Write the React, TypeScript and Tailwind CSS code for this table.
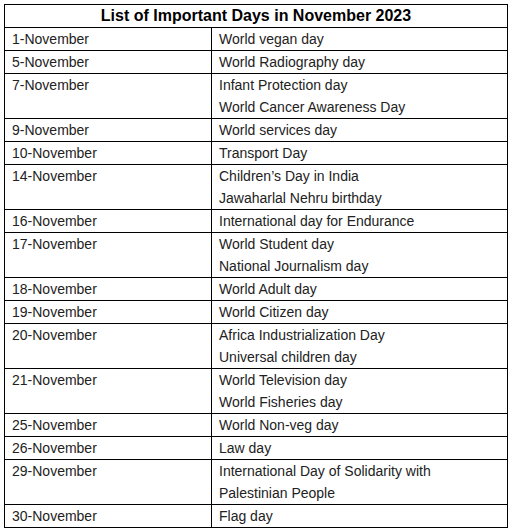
import React from "react";

const rows: [string, string[]][] = [
  ["1-November", ["World vegan day"]],
  ["5-November", ["World Radiography day"]],
  ["7-November", ["Infant Protection day", "World Cancer Awareness Day"]],
  ["9-November", ["World services day"]],
  ["10-November", ["Transport Day"]],
  ["14-November", ["Children\u2019s Day in India", "Jawaharlal Nehru birthday"]],
  ["16-November", ["International day for Endurance"]],
  ["17-November", ["World Student day", "National Journalism day"]],
  ["18-November", ["World Adult day"]],
  ["19-November", ["World Citizen day"]],
  ["20-November", ["Africa Industrialization Day", "Universal children day"]],
  ["21-November", ["World Television day", "World Fisheries day"]],
  ["25-November", ["World Non-veg day"]],
  ["26-November", ["Law day"]],
  ["29-November", ["International Day of Solidarity with", "Palestinian People"]],
  ["30-November", ["Flag day"]],
];

export default function App() {
  return (
    <div className="w-[512px] h-[531px] bg-white pt-[4px] pl-[4px] font-['Liberation_Sans',Arial,sans-serif] text-[#222]">
      <div className="w-[504px] border-l border-t border-black">
        <div className="border-r border-b border-black h-[23px] leading-[22px] text-center text-[16px] font-bold text-black">
          List of Important Days in November 2023
        </div>
        {rows.map(([d, items]) => (
          <div key={d} className="grid grid-cols-[207px_1fr] text-[14px] leading-[22px]">
            <div className="border-r border-b border-black pl-[7px]">{d}</div>
            <div className="border-r border-b border-black pl-[7px]">
              {items.map((t) => (
                <div key={t}>{t}</div>
              ))}
            </div>
          </div>
        ))}
      </div>
    </div>
  );
}
